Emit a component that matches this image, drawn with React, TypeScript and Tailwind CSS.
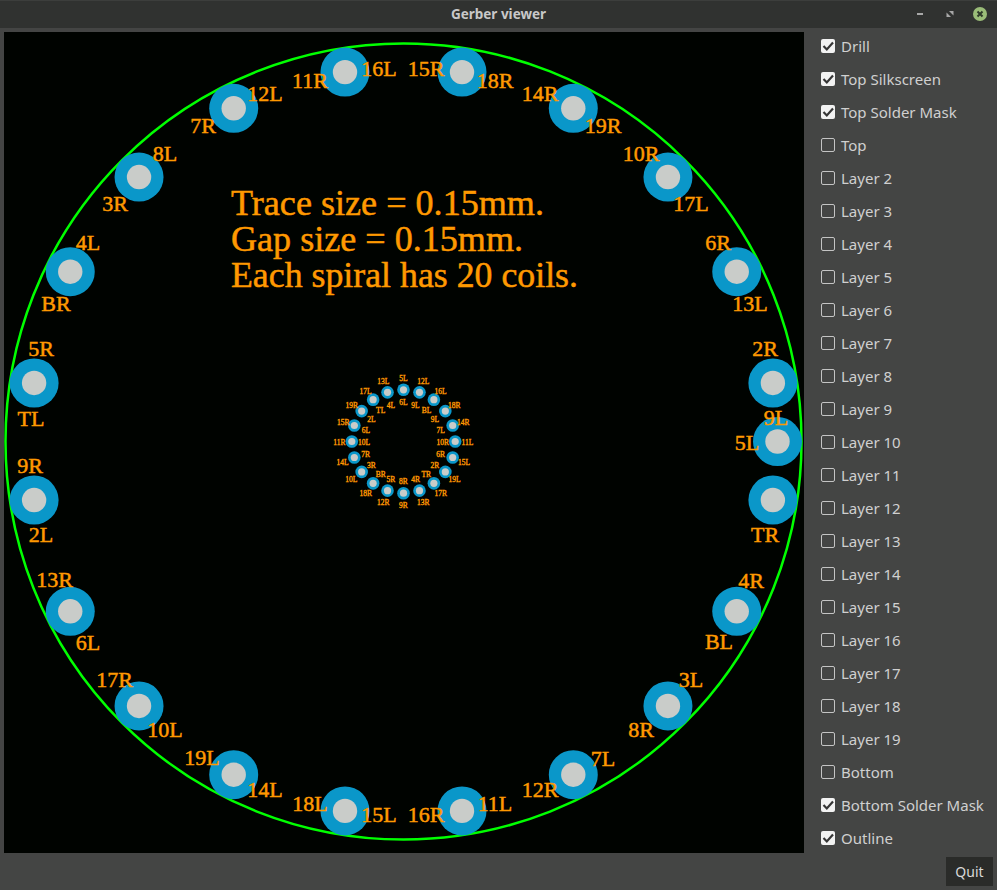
import React from 'react';

const LAYERS: { name: string; checked: boolean }[] = [
  { name: 'Drill', checked: true },
  { name: 'Top Silkscreen', checked: true },
  { name: 'Top Solder Mask', checked: true },
  { name: 'Top', checked: false },
  ...Array.from({ length: 18 }, (_, i) => ({ name: `Layer ${i + 2}`, checked: false })),
  { name: 'Bottom', checked: false },
  { name: 'Bottom Solder Mask', checked: true },
  { name: 'Outline', checked: true },
];

const CX = 403.5;
const CY = 441.5;

// Outer pads sit every 18deg starting at 9deg, plus one at 0deg
const outerPads = [0, ...Array.from({ length: 20 }, (_, i) => 9 + i * 18)].map((deg) => ({
  x: CX + 374 * Math.cos((deg * Math.PI) / 180),
  y: CY - 374 * Math.sin((deg * Math.PI) / 180),
}));
const innerPads = Array.from({ length: 20 }, (_, i) => i * 18).map((deg) => ({
  x: CX + 51.7 * Math.cos((deg * Math.PI) / 180),
  y: CY - 51.7 * Math.sin((deg * Math.PI) / 180),
}));

// [text, center x, center y] in window pixels
const BIG_LABELS: [string, number, number][] = [
  ['16L', 379, 69], ['11R', 310, 81], ['15R', 426, 69], ['18R', 495, 81],
  ['12L', 265, 94], ['7R', 203, 126], ['14R', 540, 94], ['19R', 603, 126],
  ['8L', 165, 154], ['3R', 115, 204], ['10R', 641, 154], ['17L', 691, 204],
  ['4L', 88, 243], ['BR', 56, 304], ['6R', 718, 243], ['13L', 750, 304],
  ['5R', 41, 349], ['TL', 31, 419], ['2R', 765, 349], ['9L', 776, 418],
  ['5L', 747, 443], ['TR', 765, 535], ['9R', 30, 466], ['2L', 41, 535],
  ['4R', 751, 581], ['BL', 719, 642], ['13R', 54.5, 580], ['6L', 88, 643],
  ['3L', 691, 680], ['8R', 641, 730], ['17R', 114.5, 680], ['10L', 165, 730],
  ['7L', 603, 759], ['12R', 540, 790], ['19L', 202, 758], ['14L', 265, 790],
  ['11L', 495, 804], ['16R', 426, 815], ['18L', 310, 804], ['15L', 379, 815],
];

// positions read from a 3x crop at (320,360)
const SMALL_LABELS: [string, number, number][] = [
  ['5L', 250, 55], ['13L', 190, 65], ['12L', 310, 65], ['17L', 137, 93], ['16L', 362, 93],
  ['4L', 213, 135], ['6L', 250, 128], ['9L', 286, 135], ['19R', 95, 135], ['18R', 403, 135],
  ['TL', 182, 150], ['BL', 320, 150], ['2L', 154, 178], ['9L', 345, 178], ['15R', 70, 187],
  ['14R', 430, 187], ['6L', 138, 210], ['7L', 362, 210], ['11R', 58, 246], ['10L', 132, 246],
  ['10R', 368, 246], ['11L', 442, 246], ['7R', 137, 282], ['6R', 362, 282], ['14L', 68, 306],
  ['15L', 432, 306], ['3R', 154, 315], ['2R', 345, 315], ['10L', 94, 358], ['19L', 404, 358],
  ['BR', 182, 342], ['TR', 319, 342], ['5R', 213, 358], ['8R', 250, 363], ['4R', 287, 358],
  ['18R', 137, 400], ['17R', 362, 400], ['12R', 190, 428], ['13R', 310, 428], ['9R', 250, 436],
];

const GerberCanvas: React.FC = () => (
  <svg viewBox="4 32 800 821" className="w-[800px] h-[821px] block bg-[#000300] shrink-0">
    <circle cx={CX} cy={CY} r={398} fill="none" stroke="#00ff00" strokeWidth={2.5} />
    {outerPads.map((p, i) => (
      <g key={i}>
        <circle cx={p.x} cy={p.y} r={24.5} fill="#0a97c9" />
        <circle cx={p.x} cy={p.y} r={12.2} fill="#c9ccc9" />
      </g>
    ))}
    {innerPads.map((p, i) => (
      <g key={i}>
        <circle cx={p.x} cy={p.y} r={6.3} fill="#0a97c9" />
        <circle cx={p.x} cy={p.y} r={3.6} fill="#c9ccc9" />
      </g>
    ))}
    <g fill="#ff9900" stroke="#ff9900" style={{ fontFamily: '"Liberation Serif", serif' }}>
      <text x={231} y={215} fontSize={36} strokeWidth={0.5} textLength={313} lengthAdjust="spacingAndGlyphs">Trace size = 0.15mm.</text>
      <text x={231} y={251} fontSize={36} strokeWidth={0.5} textLength={292} lengthAdjust="spacingAndGlyphs">Gap size = 0.15mm.</text>
      <text x={231} y={287} fontSize={36} strokeWidth={0.5} textLength={347} lengthAdjust="spacingAndGlyphs">Each spiral has 20 coils.</text>
      {BIG_LABELS.map(([t, x, y], i) => (
        <text key={i} x={x} y={y + 7} fontSize={22} strokeWidth={0.5} textAnchor="middle">{t}</text>
      ))}
      {SMALL_LABELS.map(([t, x, y], i) => (
        <text key={i} x={320 + x / 3} y={360 + y / 3 + 2.5} fontSize={7.5} strokeWidth={0.35} textAnchor="middle">{t}</text>
      ))}
    </g>
  </svg>
);

const LayerRow: React.FC<{ name: string; checked: boolean }> = ({ name, checked }) => (
  <label className="flex items-center h-[33px] shrink-0 gap-[6px]">
    <span className={`w-[14px] h-[14px] rounded-[2px] flex items-center justify-center shrink-0 ${checked ? 'bg-[#f2f2f2]' : 'border border-[#c4c4c4] bg-[#444544]'}`}>
      {checked && (
        <svg viewBox="0 0 14 14" className="w-[14px] h-[14px]">
          <path d="M2.5 7 L5.8 10.4 L12 3.6" fill="none" stroke="#353535" strokeWidth={2.2} />
        </svg>
      )}
    </span>
    <span className="text-[15px] leading-none text-[#d0d0d0] whitespace-nowrap">{name}</span>
  </label>
);

export default function App() {
  return (
    <div className="w-[997px] h-[890px] flex flex-col bg-[#444544] overflow-hidden" style={{ fontFamily: '"Noto Sans", sans-serif' }}>
      {/* Title bar */}
      <div className="h-[28px] shrink-0 relative flex items-center justify-center bg-[#303230] border-t border-[#3c3e3c]">
        <span className="text-[13.5px] font-bold text-[#c8c8c8]">Gerber viewer</span>
        <div className="absolute right-[10px] top-[6px] flex items-center gap-[16px]">
          <svg viewBox="0 0 14 14" className="w-[14px] h-[14px]">
            <rect x="4" y="6" width="6" height="2" fill="#a8a8a8" />
          </svg>
          <svg viewBox="0 0 14 14" className="w-[14px] h-[14px]">
            <path d="M6 4 H10.5 V8.5 Z" fill="#a8a8a8" />
            <path d="M3.5 5.5 V10 H8 Z" fill="#a8a8a8" />
          </svg>
          <svg viewBox="0 0 14 14" className="w-[14px] h-[14px]">
            <circle cx="7" cy="7" r="7" fill="#9abc78" />
            <path d="M4.5 4.5 L9.5 9.5 M9.5 4.5 L4.5 9.5" stroke="#2e3a2a" strokeWidth={2} />
          </svg>
        </div>
      </div>

      {/* Canvas and layer list */}
      <div className="flex pl-[4px] pt-[4px] h-[825px] shrink-0">
        <GerberCanvas />
        <div className="flex flex-col pl-[17px] -mt-[2.5px]">
          {LAYERS.map((l) => (
            <LayerRow key={l.name} name={l.name} checked={l.checked} />
          ))}
        </div>
      </div>

      {/* Footer */}
      <div className="flex justify-end pr-[4px] pt-[4px]">
        <button className="w-[47px] h-[29px] bg-[#2a2b29] text-[14px] text-[#d8d8d8]">Quit</button>
      </div>
    </div>
  );
}
